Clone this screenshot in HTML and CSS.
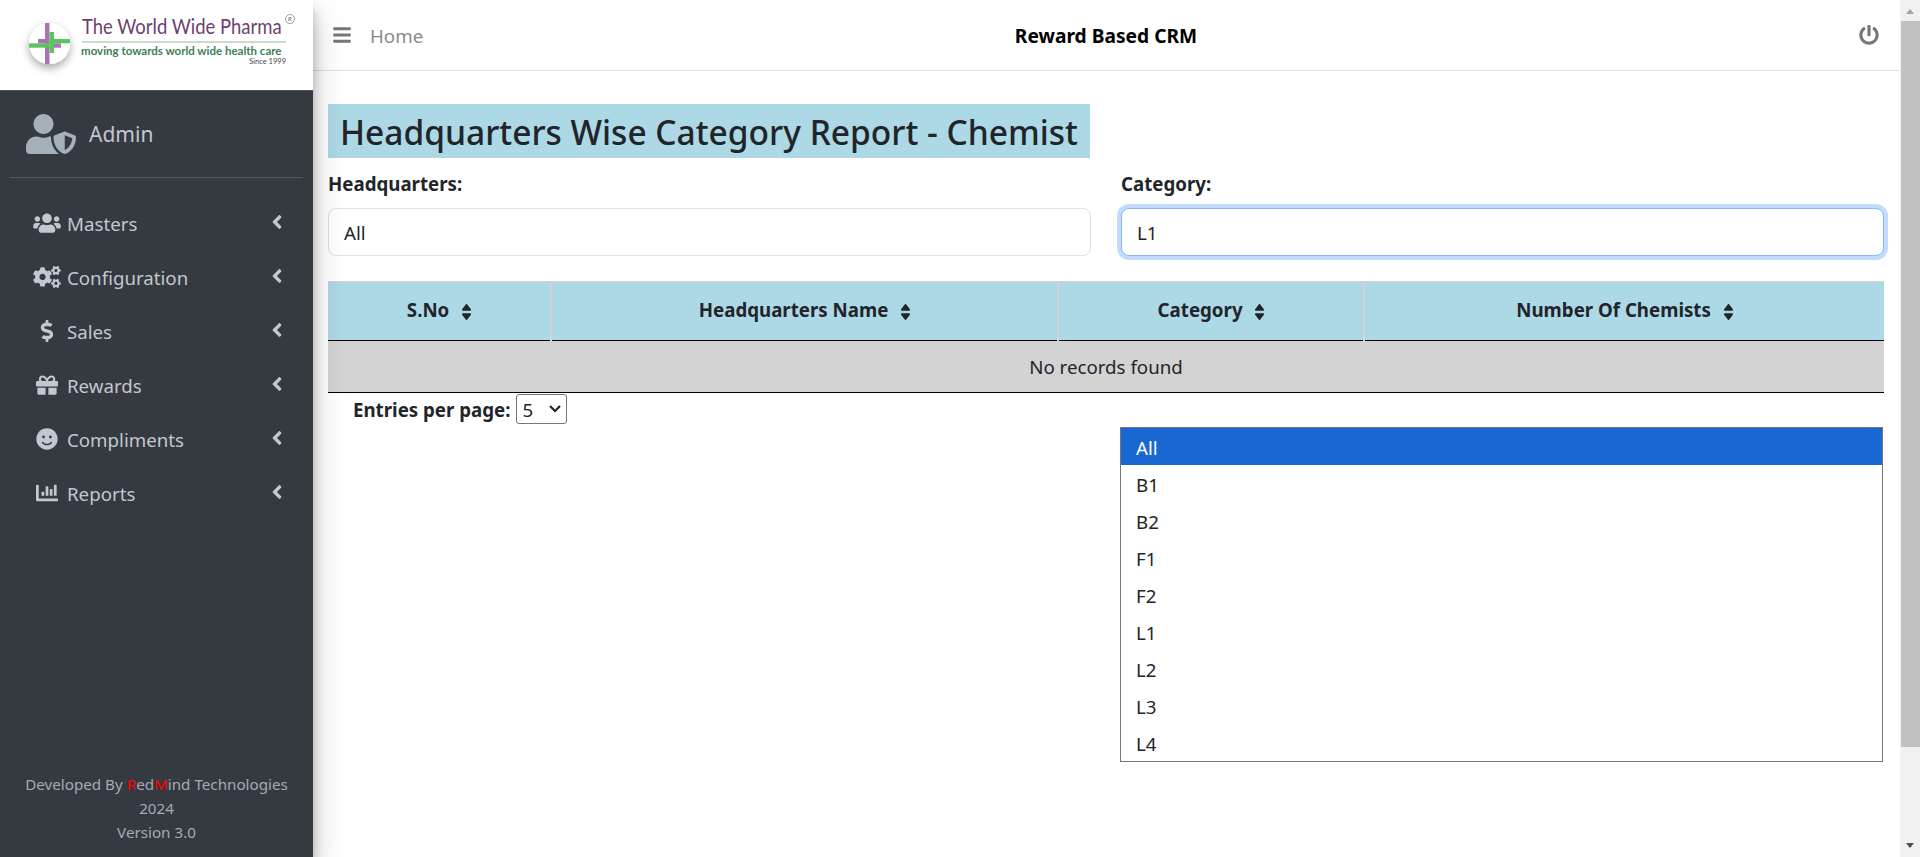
FILE: index.html
```html
<!DOCTYPE html>
<html lang="en">
<head>
    <meta charset="UTF-8">
    <meta name="viewport" content="width=device-width, initial-scale=1.0">
    <title>Headquarters Wise Category Report - Chemist</title>
    <link rel="stylesheet" href="styles.css">
</head>
<body>
    <div class="app">
        <aside class="sidebar">
            <div class="brand">
                <svg class="brand-logo" width="313" height="90" viewBox="0 0 313 90">
                    <defs>
                        <filter id="logoShadow" x="-30%" y="-30%" width="160%" height="170%">
                            <feDropShadow dx="0" dy="4" stdDeviation="4" flood-color="#000" flood-opacity="0.35"/>
                        </filter>
                    </defs>
                    <circle cx="49.5" cy="43.5" r="20.5" fill="#fff" filter="url(#logoShadow)"/>
                    <rect x="45" y="23" width="4.5" height="41" fill="#a874b4"/>
                    <rect x="38" y="39" width="7" height="4.3" fill="#a874b4"/>
                    <rect x="54" y="43.3" width="7" height="4.4" fill="#a874b4"/>
                    <rect x="49.5" y="32" width="4.5" height="21" fill="#5cc45c"/>
                    <rect x="29" y="43.3" width="20.5" height="4.4" fill="#5cc45c"/>
                    <rect x="49.5" y="39" width="20.5" height="4.3" fill="#5cc45c"/>
                    <text transform="translate(82 34) scale(0.84 1)" class="logo-name">The World Wide Pharma</text>
                    <circle cx="290" cy="19" r="4.5" fill="none" stroke="#777" stroke-width="0.7"/>
                    <text x="290" y="21.3" class="logo-reg" text-anchor="middle">R</text>
                    <rect x="82" y="41.5" width="204" height="1" fill="#9ab5a0"/>
                    <text x="81" y="54.5" class="logo-tag">moving towards world wide health care</text>
                    <text x="286" y="64" class="logo-since" text-anchor="end">Since 1999</text>
                </svg>
            </div>

            <div class="user-panel">
                <svg class="user-icon" width="50" height="40" viewBox="0 0 640 512"><path d="M622.3 271.1l-115.2-45c-4.1-1.6-12.6-3.7-22.2 0l-115.2 45c-10.7 4.2-17.7 14-17.7 24.9 0 111.6 68.7 188.8 132.9 213.9 9.6 3.7 18 1.6 22.2 0C558.4 489.9 640 420.5 640 296c0-10.9-7-20.7-17.7-24.9zM496 462.4V273.3l95.5 37.3c-5.6 87.1-60.9 135.4-95.5 151.8zM224 256c70.7 0 128-57.3 128-128S294.7 0 224 0 96 57.3 96 128s57.3 128 128 128zm96 40c0-2.5.8-4.7 1.1-7.2-2.5-.1-4.9-.8-7.5-.8h-16.7c-22.2 10.2-46.9 16-72.9 16s-50.6-5.8-72.9-16h-16.7C60.2 288 0 348.2 0 422.4V464c0 26.5 21.5 48 48 48h352c6.8 0 13.3-1.5 19.2-4-54-42.9-99.2-116.7-99.2-212z"/></svg>
                <span class="user-name">Admin</span>
            </div>

            <nav class="menu">
                <a class="menu-item">
                    <span class="menu-icon"><svg width="28" height="22" viewBox="0 0 640 512"><path d="M96 224c35.3 0 64-28.7 64-64s-28.7-64-64-64-64 28.7-64 64 28.7 64 64 64zm448 0c35.3 0 64-28.7 64-64s-28.7-64-64-64-64 28.7-64 64 28.7 64 64 64zm32 32h-64c-17.6 0-33.5 7.1-45.1 18.6 40.3 22.1 68.9 62 75.1 109.4h66c17.7 0 32-14.3 32-32v-32c0-35.3-28.7-64-64-64zm-256 0c61.9 0 112-50.1 112-112S381.9 32 320 32 208 82.1 208 144s50.1 112 112 112zm76.8 32h-8.3c-20.8 10-43.9 16-68.5 16s-47.6-6-68.5-16h-8.3C179.6 288 128 339.6 128 403.2V432c0 26.5 21.5 48 48 48h288c26.5 0 48-21.5 48-48v-28.8c0-63.6-51.6-115.2-115.2-115.2zm-223.7-13.4C161.5 263.1 145.6 256 128 256H64c-35.3 0-64 28.7-64 64v32c0 17.7 14.3 32 32 32h65.9c6.3-47.4 34.9-87.3 75.2-109.4z"/></svg></span>
                    <span class="menu-label">Masters</span>
                    <svg class="menu-arrow" width="12" height="22" viewBox="0 0 256 512"><path d="M31.7 239l136-136c9.4-9.4 24.6-9.4 33.9 0l22.6 22.6c9.4 9.4 9.4 24.6 0 33.9L127.9 256l96.4 96.4c9.4 9.4 9.4 24.6 0 33.9L201.7 409c-9.4 9.4-24.6 9.4-33.9 0l-136-136c-9.5-9.4-9.5-24.6-.1-34z"/></svg>
                </a>
                <a class="menu-item">
                    <span class="menu-icon"><svg width="28" height="22" viewBox="0 0 640 512"><path d="M512.1 191l-8.2 14.3c-3 5.3-9.4 7.5-15.1 5.4-11.8-4.4-22.6-10.7-32.1-18.6-4.6-3.8-5.8-10.5-2.8-15.7l8.2-14.3c-6.9-8-12.3-17.3-15.9-27.4h-16.5c-6 0-11.2-4.3-12.2-10.3-2-12-2.1-24.6 0-37.1 1-6 6.2-10.4 12.2-10.4h16.5c3.6-10.1 9-19.4 15.9-27.4l-8.2-14.3c-3-5.2-1.9-11.9 2.8-15.7 9.5-7.9 20.4-14.2 32.1-18.6 5.7-2.1 12.1.1 15.1 5.4l8.2 14.3c10.5-1.9 21.2-1.9 31.7 0L552 6.3c3-5.3 9.4-7.5 15.1-5.4 11.8 4.4 22.6 10.7 32.1 18.6 4.6 3.8 5.8 10.5 2.8 15.7l-8.2 14.3c6.9 8 12.3 17.3 15.9 27.4h16.5c6 0 11.2 4.3 12.2 10.3 2 12 2.1 24.6 0 37.1-1 6-6.2 10.4-12.2 10.4h-16.5c-3.6 10.1-9 19.4-15.9 27.4l8.2 14.3c3 5.2 1.9 11.9-2.8 15.7-9.5 7.9-20.4 14.2-32.1 18.6-5.7 2.1-12.1-.1-15.1-5.4l-8.2-14.3c-10.4 1.9-21.2 1.9-31.7 0zm-10.5-58.8c38.5 29.6 82.4-14.3 52.8-52.8-38.5-29.7-82.4 14.3-52.8 52.8zM386.3 286.1l33.7 16.8c10.1 5.8 14.5 18.1 10.5 29.1-8.9 24.2-26.4 46.4-42.6 65.8-7.4 8.9-20.2 11.1-30.3 5.3l-29.1-16.8c-16 13.7-34.6 24.6-54.9 31.7v33.6c0 11.6-8.3 21.6-19.7 23.6-24.6 4.2-50.4 4.4-75.9 0-11.5-2-20-11.9-20-23.6V418c-20.3-7.2-38.9-18-54.9-31.7L74 403c-10 5.8-22.9 3.6-30.3-5.3-16.2-19.4-33.3-41.6-42.2-65.7-4-10.9.4-23.2 10.5-29.1l33.3-16.8c-3.9-20.9-3.9-42.4 0-63.4L12 205.8c-10.1-5.8-14.6-18.1-10.5-29 8.9-24.2 26-46.4 42.2-65.8 7.4-8.9 20.2-11.1 30.3-5.3l29.1 16.8c16-13.7 34.6-24.6 54.9-31.7V57.1c0-11.5 8.2-21.5 19.6-23.5 24.6-4.2 50.5-4.4 76-.1 11.5 2 20 11.9 20 23.6v33.6c20.3 7.2 38.9 18 54.9 31.7l29.1-16.8c10-5.8 22.9-3.6 30.3 5.3 16.2 19.4 33.2 41.6 42.1 65.8 4 10.9.1 23.2-10 29.1l-33.7 16.8c3.9 21 3.9 42.5 0 63.5zm-117.6 21.1c59.2-77-28.7-164.9-105.7-105.7-59.2 77 28.7 164.9 105.7 105.7zm243.4 182.7l-8.2 14.3c-3 5.3-9.4 7.5-15.1 5.4-11.8-4.4-22.6-10.7-32.1-18.6-4.6-3.8-5.8-10.5-2.8-15.7l8.2-14.3c-6.9-8-12.3-17.3-15.9-27.4h-16.5c-6 0-11.2-4.3-12.2-10.3-2-12-2.1-24.6 0-37.1 1-6 6.2-10.4 12.2-10.4h16.5c3.6-10.1 9-19.4 15.9-27.4l-8.2-14.3c-3-5.2-1.9-11.9 2.8-15.7 9.5-7.9 20.4-14.2 32.1-18.6 5.7-2.1 12.1.1 15.1 5.4l8.2 14.3c10.5-1.9 21.2-1.9 31.7 0l8.2-14.3c3-5.3 9.4-7.5 15.1-5.4 11.8 4.4 22.6 10.7 32.1 18.6 4.6 3.8 5.8 10.5 2.8 15.7l-8.2 14.3c6.9 8 12.3 17.3 15.9 27.4h16.5c6 0 11.2 4.3 12.2 10.3 2 12 2.1 24.6 0 37.1-1 6-6.2 10.4-12.2 10.4h-16.5c-3.6 10.1-9 19.4-15.9 27.4l8.2 14.3c3 5.2 1.9 11.9-2.8 15.7-9.5 7.9-20.4 14.2-32.1 18.6-5.7 2.1-12.1-.1-15.1-5.4l-8.2-14.3c-10.4 1.9-21.2 1.9-31.7 0zM501.6 431c38.5 29.6 82.4-14.3 52.8-52.8-38.5-29.6-82.4 14.3-52.8 52.8z"/></svg></span>
                    <span class="menu-label">Configuration</span>
                    <svg class="menu-arrow" width="12" height="22" viewBox="0 0 256 512"><path d="M31.7 239l136-136c9.4-9.4 24.6-9.4 33.9 0l22.6 22.6c9.4 9.4 9.4 24.6 0 33.9L127.9 256l96.4 96.4c9.4 9.4 9.4 24.6 0 33.9L201.7 409c-9.4 9.4-24.6 9.4-33.9 0l-136-136c-9.5-9.4-9.5-24.6-.1-34z"/></svg>
                </a>
                <a class="menu-item">
                    <span class="menu-icon"><svg width="14" height="22" viewBox="0 0 288 512"><path d="M209.2 233.4l-108-31.6C88.7 198.2 80 186.5 80 173.5c0-16.3 13.2-29.5 29.5-29.5h66.3c12.2 0 24.2 3.7 34.2 10.5 6.1 4.1 14.3 3.1 19.5-2l34.8-34c7.1-6.9 6.1-18.4-1.8-24.5C238 74.8 207.4 64.1 176 64V16c0-8.8-7.2-16-16-16h-32c-8.8 0-16 7.2-16 16v48h-2.5C45.8 64-5.4 118.7.5 183.6c4.2 46.1 39.4 83.6 83.8 96.6l102.5 30c12.5 3.7 21.2 15.3 21.2 28.3 0 16.3-13.2 29.5-29.5 29.5h-66.3C100 368 88 364.3 78 357.5c-6.1-4.1-14.3-3.1-19.5 2l-34.8 34c-7.1 6.9-6.1 18.4 1.8 24.5 24.5 19.2 55.1 29.9 86.5 30v48c0 8.8 7.2 16 16 16h32c8.8 0 16-7.2 16-16v-48.2c46.6-.9 90.3-28.6 105.7-72.7 21.5-61.6-14.6-124.8-72.5-141.7z"/></svg></span>
                    <span class="menu-label">Sales</span>
                    <svg class="menu-arrow" width="12" height="22" viewBox="0 0 256 512"><path d="M31.7 239l136-136c9.4-9.4 24.6-9.4 33.9 0l22.6 22.6c9.4 9.4 9.4 24.6 0 33.9L127.9 256l96.4 96.4c9.4 9.4 9.4 24.6 0 33.9L201.7 409c-9.4 9.4-24.6 9.4-33.9 0l-136-136c-9.5-9.4-9.5-24.6-.1-34z"/></svg>
                </a>
                <a class="menu-item">
                    <span class="menu-icon"><svg width="22" height="22" viewBox="0 0 512 512"><path d="M32 448c0 17.7 14.3 32 32 32h160V320H32v128zm256 32h160c17.7 0 32-14.3 32-32V320H288v160zm192-320h-42.1c6.2-12.1 10.1-25.5 10.1-40 0-48.5-39.5-88-88-88-41.6 0-68.5 21.3-103 68.3-34.5-47-61.4-68.3-103-68.3-48.5 0-88 39.5-88 88 0 14.5 3.8 27.9 10.1 40H32c-17.7 0-32 14.3-32 32v80c0 8.8 7.2 16 16 16h480c8.8 0 16-7.2 16-16v-80c0-17.7-14.3-32-32-32zm-326.1 0c-22.1 0-40-17.9-40-40s17.9-40 40-40c19.9 0 34.6 3.3 86.1 80h-86.1zm206.1 0h-86.1c51.4-76.5 65.7-80 86.1-80 22.1 0 40 17.9 40 40s-17.9 40-40 40z"/></svg></span>
                    <span class="menu-label">Rewards</span>
                    <svg class="menu-arrow" width="12" height="22" viewBox="0 0 256 512"><path d="M31.7 239l136-136c9.4-9.4 24.6-9.4 33.9 0l22.6 22.6c9.4 9.4 9.4 24.6 0 33.9L127.9 256l96.4 96.4c9.4 9.4 9.4 24.6 0 33.9L201.7 409c-9.4 9.4-24.6 9.4-33.9 0l-136-136c-9.5-9.4-9.5-24.6-.1-34z"/></svg>
                </a>
                <a class="menu-item">
                    <span class="menu-icon"><svg width="22" height="22" viewBox="0 0 496 512"><path d="M248 8C111 8 0 119 0 256s111 248 248 248 248-111 248-248S385 8 248 8zm80 168c17.7 0 32 14.3 32 32s-14.3 32-32 32-32-14.3-32-32 14.3-32 32-32zm-160 0c17.7 0 32 14.3 32 32s-14.3 32-32 32-32-14.3-32-32 14.3-32 32-32zm194.8 170.2C334.3 380.4 292.5 400 248 400s-86.3-19.6-114.8-53.8c-13.6-16.3 11-36.7 24.6-20.5 22.4 26.9 55.2 42.2 90.2 42.2s67.8-15.4 90.2-42.2c13.4-16.2 38.1 4.2 24.6 20.5z"/></svg></span>
                    <span class="menu-label">Compliments</span>
                    <svg class="menu-arrow" width="12" height="22" viewBox="0 0 256 512"><path d="M31.7 239l136-136c9.4-9.4 24.6-9.4 33.9 0l22.6 22.6c9.4 9.4 9.4 24.6 0 33.9L127.9 256l96.4 96.4c9.4 9.4 9.4 24.6 0 33.9L201.7 409c-9.4 9.4-24.6 9.4-33.9 0l-136-136c-9.5-9.4-9.5-24.6-.1-34z"/></svg>
                </a>
                <a class="menu-item">
                    <span class="menu-icon"><svg width="22" height="22" viewBox="0 0 512 512"><path d="M332.8 320h38.4c6.4 0 12.8-6.4 12.8-12.8V172.8c0-6.4-6.4-12.8-12.8-12.8h-38.4c-6.4 0-12.8 6.4-12.8 12.8v134.4c0 6.4 6.4 12.8 12.8 12.8zm96 0h38.4c6.4 0 12.8-6.4 12.8-12.8V76.8c0-6.4-6.4-12.8-12.8-12.8h-38.4c-6.4 0-12.8 6.4-12.8 12.8v230.4c0 6.4 6.4 12.8 12.8 12.8zm-288 0h38.4c6.4 0 12.8-6.4 12.8-12.8v-70.4c0-6.4-6.4-12.8-12.8-12.8h-38.4c-6.4 0-12.8 6.4-12.8 12.8v70.4c0 6.4 6.4 12.8 12.8 12.8zm96 0h38.4c6.4 0 12.8-6.4 12.8-12.8V108.8c0-6.4-6.4-12.8-12.8-12.8h-38.4c-6.4 0-12.8 6.4-12.8 12.8v198.4c0 6.4 6.4 12.8 12.8 12.8zM496 384H64V80c0-8.84-7.16-16-16-16H16C7.16 64 0 71.16 0 80v336c0 17.67 14.33 32 32 32h464c8.84 0 16-7.16 16-16v-32c0-8.84-7.16-16-16-16z"/></svg></span>
                    <span class="menu-label">Reports</span>
                    <svg class="menu-arrow" width="12" height="22" viewBox="0 0 256 512"><path d="M31.7 239l136-136c9.4-9.4 24.6-9.4 33.9 0l22.6 22.6c9.4 9.4 9.4 24.6 0 33.9L127.9 256l96.4 96.4c9.4 9.4 9.4 24.6 0 33.9L201.7 409c-9.4 9.4-24.6 9.4-33.9 0l-136-136c-9.5-9.4-9.5-24.6-.1-34z"/></svg>
                </a>
            </nav>

            <footer class="sidebar-footer">
                <div>Developed By <span class="red">R</span>ed<span class="red">M</span>ind Technologies</div>
                <div>2024</div>
                <div>Version 3.0</div>
            </footer>
        </aside>

        <div class="main">
            <header class="topbar">
                <div class="topbar-left">
                    <svg width="18" height="20" viewBox="0 0 448 512"><path d="M16 132h416c8.837 0 16-7.163 16-16V76c0-8.837-7.163-16-16-16H16C7.163 60 0 67.163 0 76v40c0 8.837 7.163 16 16 16zm0 160h416c8.837 0 16-7.163 16-16v-40c0-8.837-7.163-16-16-16H16c-8.837 0-16 7.163-16 16v40c0 8.837 7.163 16 16 16zm0 160h416c8.837 0 16-7.163 16-16v-40c0-8.837-7.163-16-16-16H16c-8.837 0-16 7.163-16 16v40c0 8.837 7.163 16 16 16z"/></svg>
                    <span class="home-link">Home</span>
                </div>
                <div class="topbar-title">Reward Based CRM</div>
                <div class="topbar-right">
                    <svg width="20" height="20" viewBox="0 0 512 512"><path d="M400 54.1c63 45 104 118.6 104 201.9 0 136.8-110.8 247.7-247.5 248C120 504.3 8.2 393 8 256.4 7.9 173.1 48.9 99.3 111.8 54.2c11.7-8.3 28-4.8 35 7.7L162.6 90c5.9 10.5 3.1 23.8-6.6 31-41.5 30.8-68 79.6-68 134.9-.1 92.3 74.5 168.1 168 168.1 91.6 0 168.6-74.2 168-169.1-.3-51.8-24.7-101.8-68.1-134-9.7-7.2-12.4-20.5-6.5-30.9l15.8-28.1c7-12.4 23.2-16.1 34.8-7.8zM296 264V24c0-13.3-10.7-24-24-24h-32c-13.3 0-24 10.7-24 24v240c0 13.3 10.7 24 24 24h32c13.3 0 24-10.7 24-24z"/></svg>
                </div>
            </header>

            <section class="content">
                <h1 class="page-title">Headquarters Wise Category Report - Chemist</h1>

                <div class="filters">
                    <div class="field">
                        <label>Headquarters:</label>
                        <div class="fake-input">All</div>
                    </div>
                    <div class="field">
                        <label>Category:</label>
                        <div class="fake-input focused">L1</div>
                    </div>
                </div>

                <table class="report">
                    <thead>
                        <tr>
                            <th class="col-sno">S.No <svg class="sort" width="9" height="16" viewBox="16 60 288 392" preserveAspectRatio="none"><path d="M41 288h238c21.4 0 32.1 25.9 17 41L177 448c-9.4 9.4-24.6 9.4-33.9 0L24 329c-15.1-15.1-4.4-41 17-41zm255-105L177 64c-9.4-9.4-24.6-9.4-33.9 0L24 183c-15.1 15.1-4.4 41 17 41h238c21.4 0 32.1-25.9 17-41z"/></svg></th>
                            <th class="col-hq">Headquarters Name <svg class="sort" width="9" height="16" viewBox="16 60 288 392" preserveAspectRatio="none"><path d="M41 288h238c21.4 0 32.1 25.9 17 41L177 448c-9.4 9.4-24.6 9.4-33.9 0L24 329c-15.1-15.1-4.4-41 17-41zm255-105L177 64c-9.4-9.4-24.6-9.4-33.9 0L24 183c-15.1 15.1-4.4 41 17 41h238c21.4 0 32.1-25.9 17-41z"/></svg></th>
                            <th class="col-cat">Category <svg class="sort" width="9" height="16" viewBox="16 60 288 392" preserveAspectRatio="none"><path d="M41 288h238c21.4 0 32.1 25.9 17 41L177 448c-9.4 9.4-24.6 9.4-33.9 0L24 329c-15.1-15.1-4.4-41 17-41zm255-105L177 64c-9.4-9.4-24.6-9.4-33.9 0L24 183c-15.1 15.1-4.4 41 17 41h238c21.4 0 32.1-25.9 17-41z"/></svg></th>
                            <th>Number Of Chemists <svg class="sort" width="9" height="16" viewBox="16 60 288 392" preserveAspectRatio="none"><path d="M41 288h238c21.4 0 32.1 25.9 17 41L177 448c-9.4 9.4-24.6 9.4-33.9 0L24 329c-15.1-15.1-4.4-41 17-41zm255-105L177 64c-9.4-9.4-24.6-9.4-33.9 0L24 183c-15.1 15.1-4.4 41 17 41h238c21.4 0 32.1-25.9 17-41z"/></svg></th>
                        </tr>
                    </thead>
                    <tbody>
                        <tr><td colspan="4">No records found</td></tr>
                    </tbody>
                </table>

                <div class="entries">
                    <label>Entries per page:</label>
                    <select class="entries-select"><option>5</option></select>
                </div>

                <ul class="dropdown">
                    <li class="selected">All</li>
                    <li>B1</li>
                    <li>B2</li>
                    <li>F1</li>
                    <li>F2</li>
                    <li>L1</li>
                    <li>L2</li>
                    <li>L3</li>
                    <li>L4</li>
                </ul>
            </section>
        </div>

        <div class="scrollbar">
            <span class="scroll-up"></span>
            <div class="scroll-track"><div class="scroll-thumb"></div></div>
            <span class="scroll-down"></span>
        </div>
    </div>
</body>
</html>
```

FILE: styles.css
```css
* {
    box-sizing: border-box;
}
html, body {
    height: 100%;
    margin: 0;
    overflow: hidden;
}
body {
    font-family: "Noto Sans", "Open Sans", sans-serif;
    font-size: 18.7px;
    color: #212529;
    background-color: #fff;
}
.app {
    display: flex;
    height: 857px;
}

/* sidebar */
.sidebar {
    width: 313px;
    flex-shrink: 0;
    display: flex;
    flex-direction: column;
    background-color: #343a40;
    color: #c2c7d0;
    box-shadow: 0 14px 28px rgba(0, 0, 0, 0.25), 0 10px 10px rgba(0, 0, 0, 0.22);
    z-index: 2;
}
.brand {
    height: 91px;
    flex-shrink: 0;
    background-color: #fff;
    border-bottom: 1px solid #4b545c;
}
.brand-logo {
    display: block;
}
.logo-name {
    font-family: "Lato", sans-serif;
    font-size: 22px;
    fill: #6d3f6f;
}
.logo-reg {
    font-family: "Lato", sans-serif;
    font-size: 6px;
    fill: #666;
}
.logo-tag {
    font-family: "Lato", sans-serif;
    font-size: 11.5px;
    font-weight: 700;
    fill: #3d8058;
}
.logo-since {
    font-family: "Lato", sans-serif;
    font-size: 7.5px;
    fill: #444;
}
.user-panel {
    display: flex;
    align-items: center;
    gap: 13px;
    height: 87px;
    margin: 0 10px;
    padding-left: 16px;
    border-bottom: 1px solid #4f5962;
}
.user-icon {
    fill: #a6b0ba;
}
.user-name {
    font-size: 21px;
    color: #c2c7d0;
}
.menu {
    display: flex;
    flex-direction: column;
    padding-top: 18px;
    flex: 1;
}
.menu-item {
    display: flex;
    align-items: center;
    height: 54px;
    padding-left: 33px;
    font-size: 18.7px;
}
.menu-icon {
    width: 28px;
    display: flex;
    justify-content: center;
    margin-right: 6px;
}
.menu-icon svg, .menu-arrow {
    fill: #c2c7d0;
}
.menu-label {
    flex: 1;
}
.menu-arrow {
    margin-right: 30px;
    margin-top: -2px;
}
.sidebar-footer {
    text-align: center;
    font-size: 15.2px;
    line-height: 24px;
    color: #a4abb4;
    padding-bottom: 13px;
}
.red {
    color: #ff0000;
}

/* main area */
.main {
    flex: 1;
    min-width: 0;
    position: relative;
}
.topbar {
    height: 71px;
    display: grid;
    grid-template-columns: 1fr auto 1fr;
    align-items: center;
    padding: 0 21px 0 20px;
    border-bottom: 1px solid #dee2e6;
}
.topbar-left {
    display: flex;
    align-items: center;
    gap: 19px;
}
.topbar-left svg, .topbar-right svg {
    fill: #777;
}
.home-link {
    color: #8a8a8a;
}
.topbar-title {
    font-weight: 700;
    font-size: 19.2px;
    color: #000;
}
.topbar-right {
    display: flex;
    justify-content: flex-end;
}
.content {
    padding: 33px 16px 0 15px;
}
.page-title {
    display: inline-block;
    margin: 0;
    height: 54px;
    line-height: 56px;
    padding: 0 12px;
    font-size: 33.5px;
    font-weight: 500;
    background-color: #add8e6;
    vertical-align: top;
}
.filters {
    display: grid;
    grid-template-columns: 763px 1fr;
    gap: 30px;
    margin-top: 8px;
}
.field label {
    display: block;
    height: 42px;
    line-height: 36px;
    font-weight: 700;
}
.fake-input {
    height: 48px;
    line-height: 48px;
    padding: 0 15px;
    background-color: #fff;
    border: 1px solid #dee2e6;
    border-radius: 8px;
}
.focused {
    border-color: #86b7fe;
    box-shadow: 0 0 0 4px #c2dbfe;
}
.report {
    width: 100%;
    margin-top: 25px;
    border-collapse: collapse;
    table-layout: fixed;
}
.report th {
    height: 59px;
    padding: 0 1px 3px;
    background-color: #add8e6;
    border-top: 1px solid #d3d3d3;
    border-left: 2px solid #d3d3d3;
    border-bottom: 1px solid #000;
    font-weight: 700;
    text-align: center;
}
.report th:first-child {
    border-left: 0;
}
.col-sno { width: 223px; }
.col-hq { width: 507px; }
.col-cat { width: 306px; }
.sort {
    margin-left: 8px;
    vertical-align: -3px;
    fill: #212529;
}
.report td {
    height: 52px;
    background-color: #d3d3d3;
    border-bottom: 1px solid #000;
    text-align: center;
}
.entries {
    display: flex;
    align-items: center;
    height: 30px;
    margin-top: 1px;
    padding-left: 25px;
    gap: 6px;
}
.entries label {
    font-weight: 700;
}
.entries-select {
    appearance: none;
    width: 51px;
    height: 30px;
    padding: 0 0 0 5px;
    font-family: inherit;
    font-size: 18.7px;
    color: #212529;
    background: #fff url("data:image/svg+xml,%3Csvg xmlns='http://www.w3.org/2000/svg' width='12' height='8'%3E%3Cpath d='M1 1l5 5 5-5' fill='none' stroke='%23222' stroke-width='2.2'/%3E%3C/svg%3E") no-repeat right 5px center;
    border: 1px solid #767676;
    border-radius: 3px;
}
.dropdown {
    position: absolute;
    left: 807px;
    top: 427px;
    width: 763px;
    margin: 0;
    padding: 0;
    list-style: none;
    background-color: #fff;
    border: 1px solid #767676;
}
.dropdown li {
    height: 37px;
    line-height: 39px;
    padding-left: 15px;
}
.dropdown li.selected {
    background-color: #1967d2;
    color: #fff;
}

/* page scrollbar */
.scrollbar {
    width: 20px;
    flex-shrink: 0;
    display: flex;
    flex-direction: column;
    align-items: center;
    background-color: #f1f1f1;
}
.scroll-up, .scroll-down {
    flex-shrink: 0;
    width: 0;
    height: 0;
    border-left: 4px solid transparent;
    border-right: 4px solid transparent;
}
.scroll-up {
    border-bottom: 5px solid #a3a3a3;
    margin: 9px 0 7px;
}
.scroll-down {
    border-top: 5px solid #505050;
    margin: 7px 0 9px;
}
.scroll-track {
    flex: 1;
    width: 100%;
    padding-left: 1px;
}
.scroll-thumb {
    height: 726px;
    background-color: #c1c1c1;
}
```
